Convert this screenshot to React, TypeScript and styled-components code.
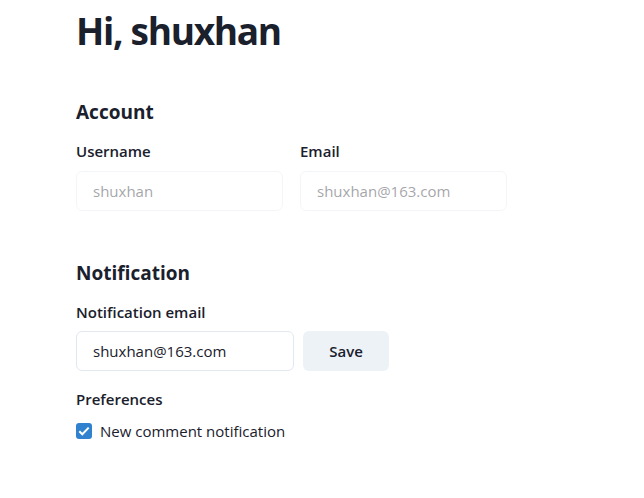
import React from "react";
import styled, { createGlobalStyle } from "styled-components";

const Global = createGlobalStyle`
  html, body { margin: 0; padding: 0; background: #ffffff; }
  body { font-family: "Open Sans", "Noto Sans", sans-serif; color: #1a202c; }
  * { box-sizing: border-box; }
`;

const Page = styled.div`
  padding: 7px 76px 40px 76px;
  display: flex;
  flex-direction: column;
`;

const Title = styled.h1`
  margin: 0;
  font-size: 37px;
  line-height: 48px;
  letter-spacing: -1.3px;
  font-weight: 700;
  color: #1a202c;
`;

const SectionTitle = styled.h2<{ $top: number }>`
  margin: ${(p) => p.$top}px 0 0 0;
  font-size: 19px;
  line-height: 28px;
  font-weight: 700;
  color: #1a202c;
`;

const Label = styled.label<{ $top: number }>`
  display: block;
  margin: ${(p) => p.$top}px 0 0 0;
  font-size: 15px;
  line-height: 24px;
  font-weight: 600;
  color: #1a202c;
`;

const FieldRow = styled.div`
  display: flex;
  gap: 17px;
  margin-top: 13px;
`;

const Field = styled.div`
  display: flex;
  flex-direction: column;
  gap: 8px;
  width: 207px;
`;

const Input = styled.input<{ $width: number }>`
  width: ${(p) => p.$width}px;
  height: 40px;
  padding: 0 16px;
  border: 1px solid #e2e8f0;
  border-radius: 6px;
  font-family: inherit;
  font-size: 15px;
  color: #1a202c;
  background: #fff;
  outline: none;
  &:disabled {
    opacity: 0.4;
    color: #1a202c;
    background: #fff;
  }
`;

const InputRow = styled.div`
  display: flex;
  gap: 9px;
  margin-top: 7px;
`;

const Button = styled.button`
  height: 40px;
  width: 86px;
  border: none;
  border-radius: 6px;
  background: #edf2f7;
  font-family: inherit;
  font-size: 15px;
  font-weight: 600;
  color: #1a202c;
`;

const CheckRow = styled.label`
  display: flex;
  align-items: center;
  gap: 8px;
  margin-top: 8px;
  font-size: 15px;
  line-height: 24px;
  color: #1a202c;
`;

const Box = styled.span`
  width: 16px;
  height: 16px;
  border-radius: 3px;
  background: #3182ce;
  display: inline-flex;
  align-items: center;
  justify-content: center;
`;

export default function App() {
  return (
    <>
      <Global />
      <Page>
        <Title>Hi, shuxhan</Title>
        <SectionTitle $top={43}>Account</SectionTitle>
        <FieldRow>
          <Field>
            <Label $top={0}>Username</Label>
            <Input $width={207} disabled defaultValue="shuxhan" />
          </Field>
          <Field>
            <Label $top={0}>Email</Label>
            <Input $width={207} disabled defaultValue="shuxhan@163.com" />
          </Field>
        </FieldRow>
        <SectionTitle $top={48}>Notification</SectionTitle>
        <Label $top={13}>Notification email</Label>
        <InputRow>
          <Input $width={218} defaultValue="shuxhan@163.com" />
          <Button>Save</Button>
        </InputRow>
        <Label $top={16}>Preferences</Label>
        <CheckRow>
          <Box>
            <svg width="12" height="10" viewBox="0 0 12 10">
              <polyline points="1.3,5.2 4.3,8.2 10.7,1.6" fill="none" stroke="#fff" strokeWidth="2" />
            </svg>
          </Box>
          New comment notification
        </CheckRow>
      </Page>
    </>
  );
}
